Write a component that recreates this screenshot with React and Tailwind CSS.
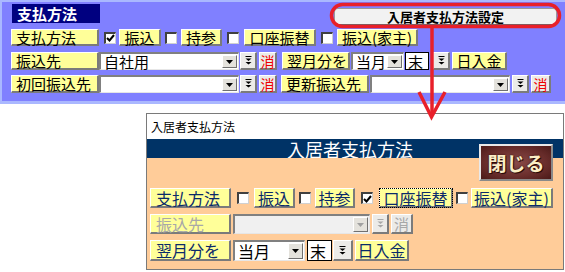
import React from "react";

const raised =
  "border-t border-l border-t-white border-l-white border-b-2 border-r-2 border-b-[#7b7b7b] border-r-[#7b7b7b]";

function YLabel({ className = "", children }) {
  return (
    <div
      className={
        "h-full shrink-0 flex items-center bg-[#ffff99] leading-none whitespace-nowrap " +
        raised +
        " " +
        className
      }
    >
      {children}
    </div>
  );
}

function Check({ checked = false, className = "" }) {
  return (
    <div
      className={
        "w-[12px] h-[12px] shrink-0 bg-white border-t-2 border-l-2 border-t-[#404040] border-l-[#404040] border-b border-r border-b-[#d0d0d0] border-r-[#d0d0d0] flex items-center justify-center " +
        className
      }
    >
      {checked && (
        <svg width="9" height="8" viewBox="0 0 9 8">
          <path d="M1 4 L3.5 6.5 L8 1" stroke="#000" strokeWidth="2" fill="none" />
        </svg>
      )}
    </div>
  );
}

function Tri({ color = "#000" }) {
  return (
    <svg width="7" height="4" viewBox="0 0 7 4">
      <path d="M0 0 H7 L3.5 4 Z" fill={color} />
    </svg>
  );
}

function DoubleArrow({ color = "#000" }) {
  return (
    <svg width="7" height="9" viewBox="0 0 7 9">
      <rect x="0.5" y="0" width="6" height="1" fill={color} />
      <path d="M0.5 2.5 H6.5 L3.5 5 Z" fill={color} />
      <path d="M0.5 6 H6.5 L3.5 8.5 Z" fill={color} />
    </svg>
  );
}

function ArrowBtn({ className = "", color = "#000" }) {
  return (
    <div
      className={
        "h-full shrink-0 bg-[#e4e2dc] flex items-center justify-center border-t border-l border-t-white border-l-white border-b border-r border-b-[#707070] border-r-[#707070] " +
        className
      }
    >
      <Tri color={color} />
    </div>
  );
}

function GrayBtn({ className = "", children }) {
  return (
    <div
      className={
        "h-full shrink-0 bg-[#ecebe8] flex items-center justify-center leading-none " +
        raised +
        " " +
        className
      }
    >
      {children}
    </div>
  );
}

function Combo({ className = "", text = "", disabled = false, textSize = "text-[15px]" }) {
  return (
    <div
      className={
        "h-full shrink-0 flex items-center border-t-2 border-l-2 border-t-[#808080] border-l-[#808080] border-b border-r border-b-[#e6e6e6] border-r-[#e6e6e6] py-[1px] pr-[1px] " +
        (disabled ? "bg-[#f0f0f0] " : "bg-white ") +
        className
      }
    >
      <span className={"flex-1 pl-[3px] leading-none whitespace-nowrap " + textSize}>{text}</span>
      <ArrowBtn className="w-[15px]" color={disabled ? "#a0a0a0" : "#000"} />
    </div>
  );
}

export default function App() {
  return (
    <div className="relative w-[565px] h-[272px] overflow-hidden bg-white font-['Noto_Sans_CJK_JP',sans-serif] text-black">
      {/* top panel */}
      <div className="h-[104px] bg-[#8080ff] border-l-2 border-t-2 border-b-[3px] border-[#aab8ff] pt-[2px] pl-[9px] pr-[8px]">
        <div className="flex h-[25px] items-start justify-between">
          <div className="ml-[1px] w-[88px] h-[19px] bg-[#000080] text-white font-bold text-[15px] leading-none flex items-center pl-[5px]">
            支払方法
          </div>
          <div className="mt-[4px] w-[223px] h-[18px] rounded-[4px] bg-[#f2f2f2] border border-[#9a9a9a] border-b-2 border-b-[#6a6a6a] flex items-center justify-center text-[13px] font-bold leading-none">
            入居者支払方法設定
          </div>
        </div>
        {/* row 1 */}
        <div className="flex items-center h-[17px] text-[15px]">
          <YLabel className="w-[88px] pl-[4px]">支払方法</YLabel>
          <Check checked className="ml-[5px]" />
          <YLabel className="w-[42px] ml-[3px] justify-center">振込</YLabel>
          <Check className="ml-[4px]" />
          <YLabel className="w-[41px] ml-[4px] justify-center">持参</YLabel>
          <Check className="ml-[5px]" />
          <YLabel className="w-[72px] ml-[5px] justify-center">口座振替</YLabel>
          <Check className="ml-[5px]" />
          <YLabel className="w-[81px] ml-[4px] justify-center">振込(家主)</YLabel>
        </div>
        {/* row 2 */}
        <div className="flex items-center h-[18px] mt-[6px] text-[15px]">
          <YLabel className="w-[88px] pl-[4px]">振込先</YLabel>
          <Combo className="w-[140px]" text="自社用" />
          <GrayBtn className="w-[17px] ml-[1px]">
            <DoubleArrow />
          </GrayBtn>
          <GrayBtn className="w-[18px] ml-[2px] text-[14px] text-[#ee0000]">消</GrayBtn>
          <YLabel className="w-[68px] ml-[5px] pl-[4px]">翌月分を</YLabel>
          <Combo className="w-[53px] ml-[1px]" text="当月" />
          <div className="h-full w-[24px] ml-[1px] bg-white border border-black flex items-center pl-[2px] leading-none">
            末
          </div>
          <GrayBtn className="w-[17px] ml-[4px]">
            <DoubleArrow />
          </GrayBtn>
          <YLabel className="w-[55px] ml-[2px] justify-center">日入金</YLabel>
        </div>
        {/* row 3 */}
        <div className="flex items-center h-[18px] mt-[5px] text-[15px]">
          <YLabel className="w-[88px] pl-[4px]">初回振込先</YLabel>
          <Combo className="w-[140px]" text="" />
          <GrayBtn className="w-[17px] ml-[1px]">
            <DoubleArrow />
          </GrayBtn>
          <GrayBtn className="w-[18px] ml-[2px] text-[14px] text-[#ee0000]">消</GrayBtn>
          <YLabel className="w-[88px] ml-[4px] pl-[4px]">更新振込先</YLabel>
          <Combo className="w-[140px] ml-[1px]" text="" />
          <GrayBtn className="w-[17px] ml-[2px]">
            <DoubleArrow />
          </GrayBtn>
          <GrayBtn className="w-[20px] ml-[2px] text-[14px] text-[#ee0000]">消</GrayBtn>
        </div>
      </div>

      {/* lower window */}
      <div className="relative ml-[146px] mt-[9px] w-[418px] h-[157px] border border-[#7a7a7a] flex flex-col">
        <div className="h-[25px] bg-white flex items-center pl-[4px] text-[12px] leading-none">
          入居者支払方法
        </div>
        <div className="h-[19px] bg-[#003366] text-white text-[18px] leading-none flex items-center justify-center pr-[10px]">
          入居者支払方法
        </div>
        <div className="flex-1 bg-[#ffcc99] pt-[30px] pl-[3px] text-[16px] text-[#0a2a6a]">
          {/* row A */}
          <div className="flex items-center h-[20px]">
            <YLabel className="w-[81px] pl-[5px]">支払方法</YLabel>
            <Check className="ml-[6px]" />
            <YLabel className="w-[41px] ml-[5px] justify-center">振込</YLabel>
            <Check className="ml-[4px]" />
            <YLabel className="w-[40px] ml-[4px] justify-center">持参</YLabel>
            <Check checked className="ml-[6px]" />
            <div className="h-full ml-[6px] w-[74px] outline-1 outline-dotted outline-black -outline-offset-1">
              <YLabel className="w-full justify-center">口座振替</YLabel>
            </div>
            <Check className="ml-[3px]" />
            <YLabel className="w-[82px] ml-[3px] justify-center">振込(家主)</YLabel>
          </div>
          {/* row B disabled */}
          <div className="flex items-center h-[20px] mt-[6px]">
            <YLabel className="w-[81px] pl-[5px] text-[#a8a8a8]">振込先</YLabel>
            <Combo className="w-[137px] ml-[2px]" text="" disabled />
            <GrayBtn className="w-[17px] ml-[2px]">
              <DoubleArrow color="#a8a8a8" />
            </GrayBtn>
            <GrayBtn className="w-[22px] ml-[2px] text-[15px] text-[#a8a8a8]">消</GrayBtn>
          </div>
          {/* row C */}
          <div className="flex items-center h-[21px] mt-[6px]">
            <YLabel className="w-[81px] pl-[5px]">翌月分を</YLabel>
            <Combo className="w-[72px] ml-[2px] text-black" text="当月" textSize="text-[16px]" />
            <div className="h-full w-[25px] ml-[2px] bg-white border border-black flex items-center pl-[2px] leading-none text-black">
              末
            </div>
            <GrayBtn className="w-[20px] ml-[1px]">
              <DoubleArrow />
            </GrayBtn>
            <YLabel className="w-[54px] ml-[2px] justify-center">日入金</YLabel>
          </div>
        </div>
        {/* close button */}
        <div className="absolute left-[332px] top-[30px] w-[74px] h-[37px] border-2 border-t-[#e8e8e8] border-l-[#e8e8e8] border-b-[#8a8a8a] border-r-[#8a8a8a] bg-[radial-gradient(ellipse_at_center,#8a4a48_0%,#6a2e2c_60%,#4a1a18_100%)] flex items-center justify-center">
          <span className="text-[19px] font-bold leading-none text-[#fbeec6] [text-shadow:0_0_2px_#2a0a08,1px_1px_0_#2a0a08]">
            閉じる
          </span>
        </div>
      </div>

      {/* red annotation */}
      <svg className="absolute inset-0 pointer-events-none" width="565" height="272" viewBox="0 0 565 272">
        <rect x="331.5" y="4.5" width="228" height="22" rx="11" fill="none" stroke="#e8202a" strokeWidth="3.5" />
        <line x1="432" y1="27" x2="432" y2="116" stroke="#e8202a" strokeWidth="3.5" />
        <polyline points="419,92 431.5,117 445,92" fill="none" stroke="#e8202a" strokeWidth="3.5" strokeLinejoin="miter" />
      </svg>
    </div>
  );
}
